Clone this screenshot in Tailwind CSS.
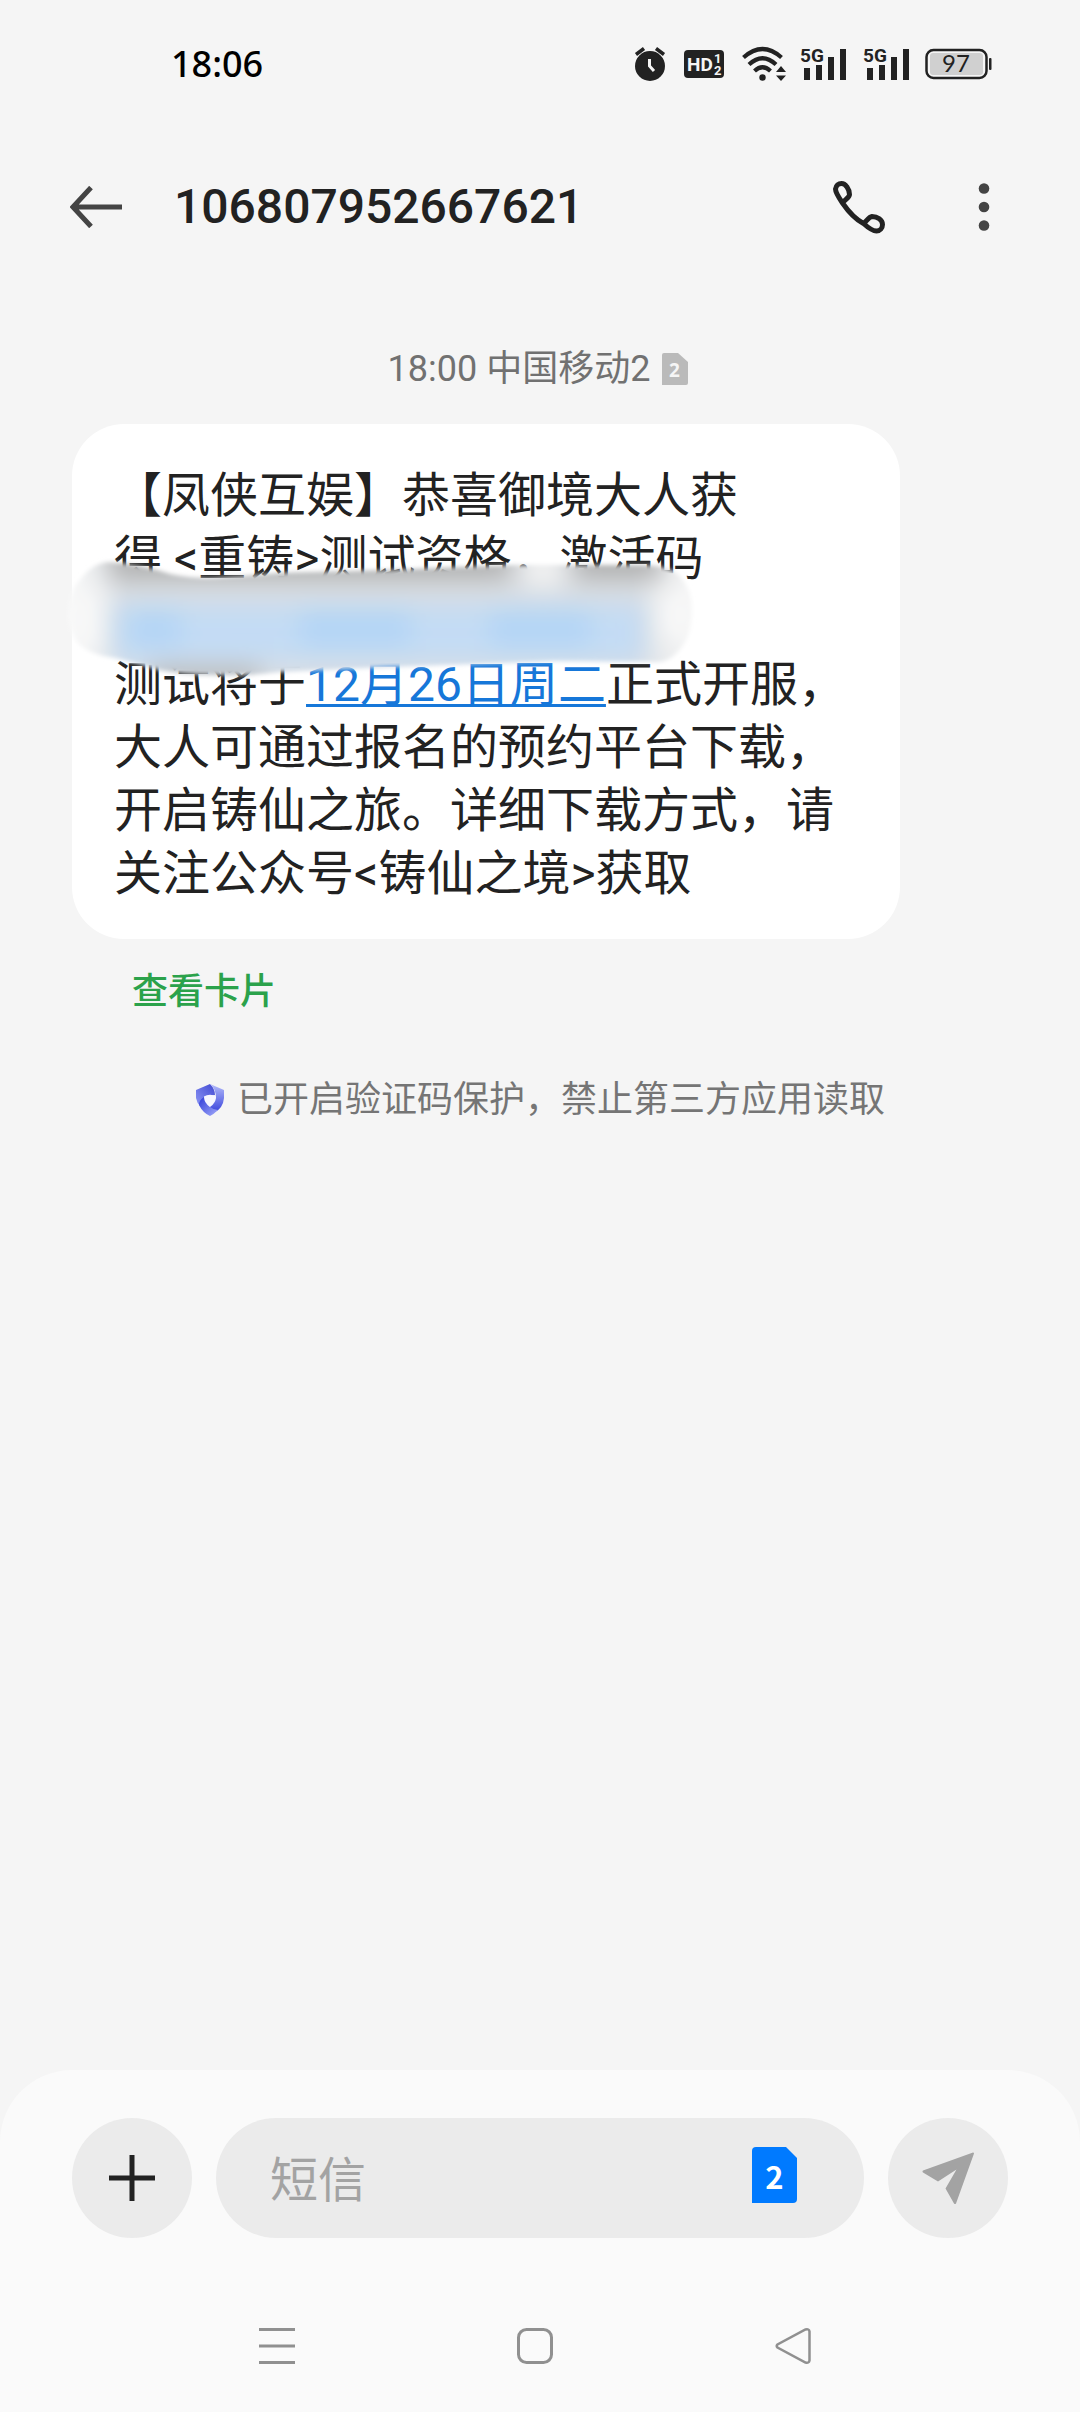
<!DOCTYPE html>
<html lang="zh-CN">
<head>
    <meta charset="UTF-8">
    <meta name="viewport" content="width=device-width, initial-scale=1.0">
    <title>106807952667621</title>
    <script src="https://cdn.jsdelivr.net/npm/@tailwindcss/browser@4"></script>
</head>
<body class="min-h-screen flex flex-col bg-[#f5f5f5] text-[#222222] font-[Roboto,'Noto_Sans_CJK_SC',sans-serif]">

    <!-- status bar -->
    <div class="h-32 pl-[171px] pr-[88px] flex items-center justify-between">
        <span class="text-4xl font-medium text-black font-['Noto_Sans',sans-serif]">18:06</span>
        <div class="flex items-center">
            <svg class="w-8 h-9" viewBox="0 0 32 36" fill="none">
                <circle cx="16" cy="20" r="15" fill="#222"/>
                <path d="M2 8.500l8-6M30 8.500l-8-6" stroke="#222" stroke-width="3.500"/>
                <path d="M15.500 13v7l4.500 5" stroke="#f5f5f5" stroke-width="3"/>
            </svg>
            <svg class="ml-[18px] w-10 h-7" viewBox="0 0 40 28">
                <rect width="40" height="28" rx="4" fill="#222"/>
                <text x="3" y="21" font-family="Roboto" font-weight="700" font-size="19" fill="#f5f5f5">HD</text>
                <text x="30" y="13" font-family="Roboto" font-weight="700" font-size="13" fill="#f5f5f5">1</text>
                <text x="30" y="25" font-family="Roboto" font-weight="700" font-size="13" fill="#f5f5f5">2</text>
            </svg>
            <svg class="ml-[18px] w-11 h-9" viewBox="0 0 44 36" fill="none">
                <path d="M1.500 11.500Q20.500-5.500 39.500 11.500M7 18.500Q20.500 6 34 18.500M12.500 25Q20.500 17.500 28.500 25" stroke="#222" stroke-width="4.200"/>
                <circle cx="20.500" cy="31.500" r="3.200" fill="#222"/>
                <path d="M39 20l5 6H34zM39 35l5-5.500H34z" fill="#222"/>
            </svg>
            <svg class="ml-[14px] w-[47px] h-9 overflow-visible" viewBox="0 0 47 36">
                <text x="0" y="16" font-family="Roboto" font-weight="700" font-size="19" fill="#222">5G</text>
                <path d="M4 22h6v12H4zM16 19h6v15h-6zM28 11h6v23h-6zM40 3h6v31h-6z" fill="#222"/>
            </svg>
            <svg class="ml-4 w-[47px] h-9 overflow-visible" viewBox="0 0 47 36">
                <text x="0" y="16" font-family="Roboto" font-weight="700" font-size="19" fill="#222">5G</text>
                <path d="M4 22h6v12H4zM16 19h6v15h-6zM28 11h6v23h-6zM40 3h6v31h-6z" fill="#222"/>
            </svg>
            <svg class="ml-[15px] w-[67px] h-8" viewBox="0 0 67 32">
                <rect x="1.500" y="2" width="60" height="28" rx="7" fill="none" stroke="#222" stroke-width="2.500"/>
                <rect x="5" y="5" width="53" height="22" rx="3" fill="#d0d0d0"/>
                <rect x="64" y="10" width="2.500" height="12" rx="1" fill="#222"/>
                <text x="31" y="24" text-anchor="middle" font-family="Lato" font-size="24" fill="#222">97</text>
            </svg>
        </div>
    </div>

    <!-- conversation header -->
    <header class="h-[158px] pl-[70px] pr-[90px] flex items-center">
        <button aria-label="返回">
            <svg class="w-[52px] h-[42px]" viewBox="0 0 52 42" fill="none" stroke="#444" stroke-width="5">
                <path d="M21 1.500L3 21l18 19.500M3 21h49"/>
            </svg>
        </button>
        <h1 class="ml-[52px] flex-1 text-5xl font-medium">106807952667621</h1>
        <button aria-label="拨打电话">
            <svg class="w-[54px] h-[54px]" viewBox="0 0 54 54" fill="none" stroke="#222" stroke-width="5" stroke-linejoin="round">
                <path d="M10.500 23C5 15 3.500 11 3.500 9C4 5.500 6.500 3.500 9.500 3.500C13.500 3.500 17.500 9 17.500 14.500C17.500 17.500 13 19.500 10.500 23C16 31 23 39 31.500 43.500C35 41 36.500 37 40 36.500C45.500 36.500 50.500 40 50.500 44.500C50.500 48 48 51 44.500 51C41.500 51 37 48.500 31.500 43.500"/>
            </svg>
        </button>
        <button aria-label="更多" class="ml-[92px]">
            <svg class="w-3 h-12" viewBox="0 0 12 48" fill="#444">
                <circle cx="6" cy="5.500" r="5.300"/>
                <circle cx="6" cy="24" r="5.300"/>
                <circle cx="6" cy="42.500" r="5.300"/>
            </svg>
        </button>
    </header>

    <!-- messages -->
    <main class="flex-1 px-[72px] pt-14">
        <p class="pr-1 flex justify-center items-center gap-3 text-4xl/[54px] text-[#717171]">
            18:00 中国移动2
            <svg class="w-[26px] h-8" viewBox="0 0 26 32">
                <path d="M2 0h14l10 9v21q0 2-2 2H0V2q0-2 2-2z" fill="#bababa"/>
                <text x="12.500" y="24" text-anchor="middle" font-family="Noto Sans" font-weight="700" font-size="19" fill="#f5f5f5">2</text>
            </svg>
        </p>

        <div class="relative mt-7 w-fit rounded-[52px] bg-white pl-[42px] pr-[54px] pt-10 pb-[34px] text-5xl/[63px]">
            <p>【凤侠互娱】恭喜御境大人获<br>得 &lt;重铸&gt;测试资格，激活码</p>
            <p class="mt-[63px]">测试将于<a href="#" class="text-[#1677d9] underline decoration-3 underline-offset-3">12月26日周二</a>正式开服，<br>大人可通过报名的预约平台下载，<br>开启铸仙之旅。详细下载方式，请<br>关注公众号&lt;铸仙之境&gt;获取</p>

            <!-- smudge over the activation code -->
            <svg class="absolute -left-2 top-32 w-[640px] h-[130px]" viewBox="64 552 640 130">
                <defs>
                    <clipPath id="smudge"><path d="M68 612Q70 590 80 580Q92 563 109 562Q140 564 170 574Q198 580 225 577Q250 576 279 573L389 570L515 565L641 565Q668 565 680 576Q693 592 692 612Q691 632 685 642Q674 661 658 662L554 661L389 667L279 672Q250 676 225 675Q190 676 159 670Q140 664 115 658Q90 655 78 643Q68 630 68 612z"/></clipPath>
                    <linearGradient id="base" x1="0" x2="1">
                        <stop offset="0" stop-color="#fafafa"/><stop offset=".1" stop-color="#dbdfe3"/>
                        <stop offset=".9" stop-color="#dbdfe3"/><stop offset="1" stop-color="#f6f6f6"/>
                    </linearGradient>
                    <filter id="edge"><feGaussianBlur stdDeviation="2"/></filter>
                    <filter id="soft" x="-20%" y="-60%" width="140%" height="220%" color-interpolation-filters="sRGB"><feGaussianBlur stdDeviation="12"/></filter>
                </defs>
                <g filter="url(#edge)">
                    <g clip-path="url(#smudge)">
                        <rect x="66" y="550" width="628" height="140" fill="url(#base)"/>
                        <g filter="url(#soft)">
                            <path d="M110 545h400v34H110zM575 545h85v34h-85zM150 668h110v16H150z" fill="#b0b0b0"/>
                            <path d="M525 550h36v36h-36z" fill="#f2f2f2"/>
                            <rect x="114" y="604" width="530" height="58" fill="#c3dbf4"/>
                            <path d="M130 610h50v36h-50zM300 610h110v36H300zM490 610h100v36h-100z" fill="#b3d5f5"/>
                            <path d="M660 590h36v50h-36zM66 590h34v60H66z" fill="#f8f8f8"/>
                        </g>
                    </g>
                </g>
            </svg>
        </div>

        <button class="block mt-[26px] ml-[60px] text-4xl/[54px] font-medium text-[#2ba24b]">查看卡片</button>

        <p class="mt-[54px] flex justify-center items-center gap-3 text-4xl/[54px] text-[#757575]">
            <svg class="w-[30px] h-8" viewBox="0 0 30 32">
                <defs>
                    <linearGradient id="s1" x1="0" y1="1" x2="1" y2="0"><stop offset="0" stop-color="#8d97f5"/><stop offset="1" stop-color="#4149d2"/></linearGradient>
                    <linearGradient id="s2" x1="0" y1="0" x2="0" y2="1"><stop offset="0" stop-color="#b4bcfa"/><stop offset="1" stop-color="#3a44dc"/></linearGradient>
                    <linearGradient id="s3" x1="0" y1="0" x2="1" y2="1"><stop offset="0" stop-color="#2f3cd8"/><stop offset="1" stop-color="#a3abfa"/></linearGradient>
                </defs>
                <path d="M15 0L1 6V14Q2 19 5 22L10 12L20 11Q20 5 15 0z" fill="url(#s1)"/>
                <path d="M15 0L29 6V14Q28 24 20 28Q14 26 15 22L21 14Q21 5 15 0z" fill="url(#s2)"/>
                <path d="M9 13Q4 16 4 21Q8 29 15 32Q19 30 23 26Q14 26 9 13z" fill="url(#s3)"/>
                <path d="M9 12.500Q15 9 21 12.500Q21 19 15 23Q9 19 9 12.500z" fill="#f6f6ff"/>
            </svg>
            已开启验证码保护，禁止第三方应用读取
        </p>
    </main>

    <!-- compose bar and system navigation -->
    <footer class="rounded-t-[72px] bg-[#fafafa] pt-12">
        <form class="px-[72px] flex gap-6">
            <button type="button" aria-label="添加" class="size-[120px] shrink-0 rounded-full bg-[#ebebeb] flex items-center justify-center">
                <svg class="size-[46px]" viewBox="0 0 46 46" stroke="#222" stroke-width="5"><path d="M0 23h46M23 0v46"/></svg>
            </button>
            <div class="flex-1 min-w-0 h-[120px] rounded-full bg-[#ebebeb] pl-[54px] pr-[67px] flex items-center">
                <input type="text" aria-label="短信" placeholder="短信" class="flex-1 min-w-0 h-20 pt-1 text-5xl outline-none placeholder:text-[#a3a3a3]">
                <button type="button" aria-label="切换到卡2" class="mb-1.5">
                    <svg class="w-[45px] h-14" viewBox="0 0 45 56">
                        <path d="M4 0h30l11 11v41q0 4-4 4H0V4q0-4 4-4z" fill="#007aff"/>
                        <text x="22.500" y="42" text-anchor="middle" font-family="Noto Sans CJK SC" font-weight="700" font-size="31" fill="#fff">2</text>
                    </svg>
                </button>
            </div>
            <button type="submit" aria-label="发送" class="size-[120px] shrink-0 rounded-full bg-[#ebebeb] flex items-center justify-center">
                <svg class="size-[52px]" viewBox="0 0 52 52"><path d="M51 0.500L1 18.500Q0 19.500 1 20.500L16 29.500L34.500 17.500L23.500 36.500L32 51.500Q33 52.500 34 51.500L52 1.500Q52 0.500 51 0.500z" fill="#a3a3a3"/></svg>
            </button>
        </form>
        <nav class="mt-[72px] mb-[30px] pl-[148px] pr-[158px] h-[72px] grid grid-cols-3 justify-items-center items-center">
            <button aria-label="最近任务">
                <svg class="size-9" viewBox="0 0 36 36" stroke="#909090" stroke-width="3"><path d="M0 1.500h36M0 18h36M0 34.500h36"/></svg>
            </button>
            <button aria-label="主屏幕">
                <svg class="size-9" viewBox="0 0 36 36" fill="none" stroke="#909090" stroke-width="3"><rect x="1.500" y="1.500" width="33" height="33" rx="8"/></svg>
            </button>
            <button aria-label="返回上一级">
                <svg class="size-9" viewBox="0 0 36 36" fill="none" stroke="#909090" stroke-width="2.500"><path d="M2.500 16.500Q1 18 2.500 19.500L30.500 34.500Q34 35.500 34.500 32.500V3.500Q34 0.500 30.500 1.500z"/></svg>
            </button>
        </nav>
    </footer>
</body>
</html>
